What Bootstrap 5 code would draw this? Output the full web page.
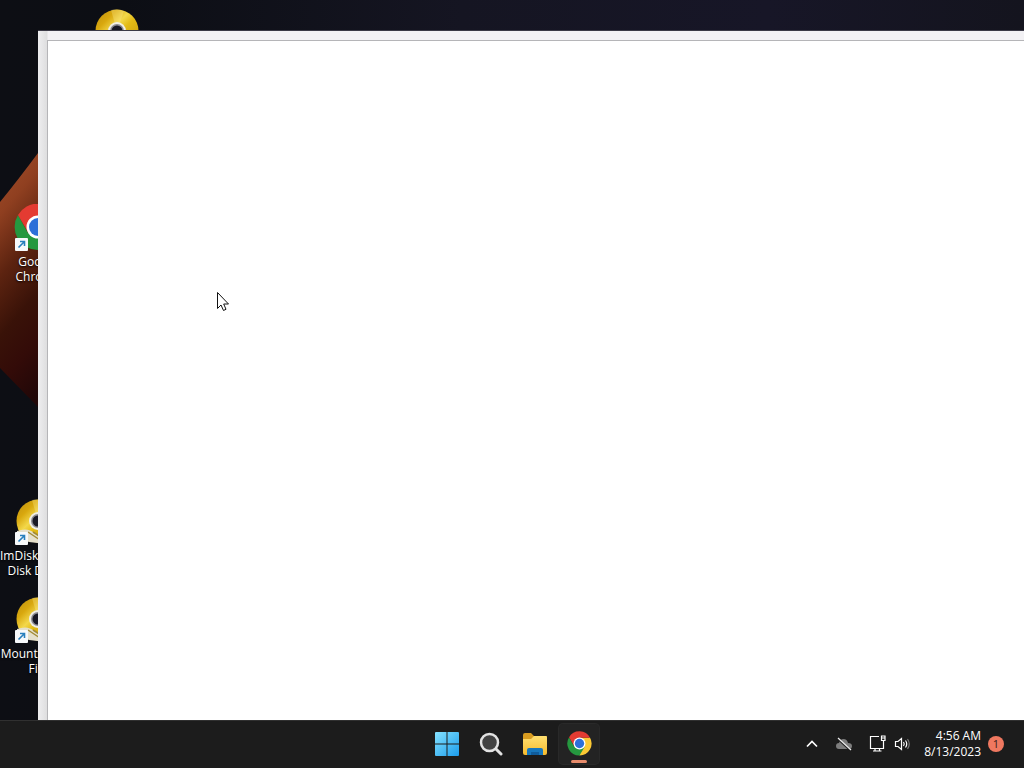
<!DOCTYPE html>
<html lang="en">
<head>
<meta charset="utf-8">
<meta name="viewport" content="width=device-width, initial-scale=1">
<title>Desktop</title>
<link href="https://cdn.jsdelivr.net/npm/bootstrap@5.3.0/dist/css/bootstrap.min.css" rel="stylesheet">
<style>
body { font-family: "Open Sans", "Noto Sans", sans-serif; font-size: 12px; line-height: 15px; background: #0c0d12; color: #fff; }
.desktop { background: linear-gradient(90deg, #0d0e14 0, #0c0e14 12%, #151522 45%, #171627 75%, #14141e 100%); }
.wallpaper { width: 60px; height: 280px; top: 140px; left: 0; }
.icon-grid { display: grid; grid-template-columns: 76px 76px; grid-auto-rows: 98px; column-gap: 3px; padding-top: 8px; }
.shortcut { color: #fff; text-decoration: none; text-shadow: 0 1px 2px #000; white-space: nowrap; }
.shortcut svg { display: block; width: 48px; height: 48px; margin: 0 auto 2px; }
.row-1 { grid-area: 1 / 2; }
.row-3 { grid-area: 3 / 1; }
.row-6 { grid-area: 6 / 1; }
.row-7 { grid-area: 7 / 1; }
.app-window { top: 30px; left: 38px; right: 0; bottom: 0; padding: 9px 0 0 9px; border-top: 1px solid #3a3946; background: linear-gradient(90deg, #eeeef0 0, #dededf 9px, #f2f1f4 10px); }
.app-page { background: #fff; border: solid #b5b5b8; border-width: 1px 0 0 1px; }
.pointer { left: 217px; top: 292px; }
.taskbar { display: grid; grid-template-columns: 1fr auto 1fr; height: 48px; padding: 0 0 2px 2px; background: #1c1c1c; border-top: 1px solid #303030; }
.task-btn { width: 40px; height: 40px; padding: 0; border: 0; border-radius: 4px; background: transparent; position: relative; display: flex; align-items: center; justify-content: center; }
.task-btn.running { background: #232323; box-shadow: 0 0 0 1px #292929; }
.task-btn.running::after { content: ""; position: absolute; bottom: 1px; left: 12px; width: 16px; height: 3px; border-radius: 2px; background: #e88c6c; }
.tray button { border: 0; padding: 0; background: transparent; color: #fff; display: flex; align-items: center; }
.tray { padding-right: 20px; }
.tray .clock-btn { gap: 7px; margin-left: 13px; }
.clock { line-height: 16px; text-align: right; }
.notice { width: 16px; height: 16px; border-radius: 50%; background: #ef7860; color: #38201b; font-size: 11px; }
</style>
</head>
<body>
<svg width="0" height="0" class="position-absolute" aria-hidden="true">
  <defs>
    <linearGradient id="gold" x1="0" y1="0" x2="1" y2="1"><stop offset="0" stop-color="#b98b12"/><stop offset=".25" stop-color="#d9a80e"/><stop offset=".42" stop-color="#f3d84a"/><stop offset=".55" stop-color="#e3bb16"/><stop offset="1" stop-color="#bd9208"/></linearGradient>
    <linearGradient id="sky" x1="0" y1="0" x2="1" y2="1"><stop offset="0" stop-color="#85e2ff"/><stop offset="1" stop-color="#1b9cec"/></linearGradient>
    <linearGradient id="folder" x1="0" y1="0" x2="0" y2="1"><stop offset="0" stop-color="#ffdf70"/><stop offset="1" stop-color="#f5bb2e"/></linearGradient>
    <linearGradient id="ember" x1="0" y1="0" x2=".25" y2="1"><stop offset="0" stop-color="#a9522d"/><stop offset=".25" stop-color="#8f3f20"/><stop offset=".46" stop-color="#5c2310"/><stop offset=".66" stop-color="#391208"/><stop offset=".82" stop-color="#330b08"/><stop offset="1" stop-color="#210708"/></linearGradient>
    <symbol id="disc" viewBox="0 0 48 48">
      <circle cx="24" cy="23" r="21.500" fill="url(#gold)"/>
      <path d="M24 23 18 2Q25 0 31 3Z" fill="#fff29a" opacity=".3"/>
      <circle cx="24" cy="23" r="9" fill="#f0eee5"/><circle cx="24" cy="23" r="7" fill="#8a8990"/><circle cx="24" cy="23" r="5.500" fill="#181824"/>
    </symbol>
    <symbol id="chrome" viewBox="0 0 48 48">
      <path d="M24 24 44 12.500A23 23 0 0 1 24 47Z" fill="#fcc934"/>
      <path d="M24 24 34 30 24 47A23 23 0 0 1 4 12L14 30Z" fill="#25983f"/>
      <path d="M24 13H44.300L34 30Z" fill="#fcc934"/>
      <path d="M4 12 14.500 30 24 13H44.300A23 23 0 0 0 4 12Z" fill="#e43b32"/>
      <circle cx="24" cy="24" r="11.500" fill="#fff"/><circle cx="24" cy="24" r="9" fill="#2d6fd8"/>
    </symbol>
    <symbol id="link" viewBox="0 0 13 13"><rect width="13" height="13" rx="1" fill="#f7f9fb"/><path d="M3.500 9.500 9 4M5 3.500H9.500V8" fill="none" stroke="#287fbd" stroke-width="1.600"/></symbol>
    <symbol id="disc-drive" viewBox="0 0 48 48"><use href="#disc" width="48" height="48"/><path d="M3 33Q14 29 20 35L30 41 36 38 41 42 32 46 15 44 3 39Z" fill="#e5e0cc"/><path d="M14 34 29 44M19 34 33 43" stroke="#a28b37" stroke-width="1.500"/></symbol>
  </defs>
</svg>
<div class="d-flex flex-column vh-100 overflow-hidden">
  <main class="desktop flex-fill position-relative overflow-hidden">
    <svg class="wallpaper position-absolute" viewBox="0 0 60 280" aria-hidden="true"><path d="M0 62Q18 40 38 13L60 0V280L38 267 0 228Z" fill="url(#ember)"/></svg>
    <div class="icon-grid position-absolute top-0 start-0">
      <a class="shortcut row-1 text-center" href="#" aria-label="Disc"><svg><use href="#disc"/></svg></a>
      <a class="shortcut row-3 text-center" href="#"><svg viewBox="0 0 48 48"><use href="#chrome" y="-1" width="48" height="48"/><use href="#link" x="1" y="34" width="13" height="13"/></svg>Google<br>Chrome</a>
      <a class="shortcut row-6 text-center" href="#"><svg viewBox="0 0 48 48"><use href="#disc-drive"/><use href="#link" x="1" y="34" width="13" height="13"/></svg>ImDisk Virtual<br>Disk Driver</a>
      <a class="shortcut row-7 text-center" href="#"><svg viewBox="0 0 48 48"><use href="#disc-drive"/><use href="#link" x="1" y="34" width="13" height="13"/></svg>Mount Image<br>File</a>
    </div>
    <section class="app-window position-absolute d-flex" aria-label="Window"><div class="app-page flex-fill"></div></section>
    <svg class="pointer position-absolute" width="13" height="20" viewBox="0 0 13 20" aria-hidden="true"><path d="M.5.5V16.500L4 13 6.500 18.500 9 17.300 6.700 12H11.500Z" fill="#fff" stroke="#111"/></svg>
  </main>
  <footer class="taskbar align-items-center">
    <span></span>
    <div class="d-flex gap-1">
      <button class="task-btn" aria-label="Start"><svg width="24" height="24" viewBox="0 0 24 24"><path d="M1 0H11.500V11.500H0V1Q0 0 1 0ZM12.500 0H23Q24 0 24 1V11.500H12.500ZM0 12.500H11.500V24H1Q0 24 0 23ZM12.500 12.500H24V23Q24 24 23 24H12.500Z" fill="url(#sky)"/></svg></button>
      <button class="task-btn" aria-label="Search"><svg width="24" height="24" viewBox="0 0 24 24"><circle cx="10.500" cy="10.500" r="8.500" fill="#424242" stroke="#e2e2e2" stroke-width="2.500"/><path d="M17 17 22 22" stroke="#e2e2e2" stroke-width="3" stroke-linecap="round"/></svg></button>
      <button class="task-btn" aria-label="File Explorer"><svg width="26" height="24" viewBox="0 0 26 24"><path d="M1 3Q1 1 3 1H9L12 4H24Q25 4 25 5V10H1Z" fill="#d99c20"/><path d="M1 7H9L12 4H24Q25 4 25 6V21Q25 23 23 23H3Q1 23 1 21Z" fill="url(#folder)"/><path d="M5 23V18Q5 16 7 16H19Q21 16 21 18V23Z" fill="#1777bd"/><path d="M9 23V20H17V23" fill="#105c9b"/></svg></button>
      <button class="task-btn running" aria-label="Google Chrome"><svg width="25" height="25"><use href="#chrome"/></svg></button>
    </div>
    <div class="tray d-flex justify-content-end align-items-center">
      <button class="me-3" aria-label="Show hidden icons"><svg width="14" height="14" viewBox="0 0 14 14"><path d="M2 9.500 7 4.500 12 9.500" fill="none" stroke="#fff" stroke-width="1.700"/></svg></button>
      <button class="me-3" aria-label="OneDrive"><svg width="18" height="14" viewBox="0 0 18 14"><path d="M4 12Q1 12 1 9T4 6Q5 2 8.500 2 12 2 13 6 17 6 17 9T14 12Z" fill="#7d7d7d"/><path d="M2 1 15 13" stroke="#1c1c1c" stroke-width="2"/><path d="M3 1 16 13" stroke="#eee" stroke-width="1.300"/></svg></button>
      <button class="me-2" aria-label="Network"><svg width="17" height="17" viewBox="0 0 17 17" fill="none" stroke="#fff" stroke-width="1.200"><path d="M10 1.500H1.500V13.500H14.500V7M6 13.500V16M10.500 13.500V16M4 16H12.500M12.500 1H16V5.500H12.500ZM14.500 5.500V8M12.500 3H16"/></svg></button>
      <button aria-label="Volume"><svg width="17" height="16" viewBox="0 0 17 16" fill="none" stroke="#fff" stroke-width="1.200"><path d="M1.500 5.500H4L7.500 2.500V13.500L4 10.500H1.500ZM9.500 6Q11 8 9.500 10M11.500 4.500Q14 8 11.500 11.500"/><path d="M13.500 3Q17 8 13.500 13" stroke="#777"/></svg></button>
      <button class="clock-btn" aria-label="Date and notifications"><span class="clock">4:56 AM<br>8/13/2023</span><span class="notice d-flex align-items-center justify-content-center">1</span></button>
    </div>
  </footer>
</div>
<script src="https://cdn.jsdelivr.net/npm/bootstrap@5.3.0/dist/js/bootstrap.bundle.min.js"></script>
</body>
</html>
